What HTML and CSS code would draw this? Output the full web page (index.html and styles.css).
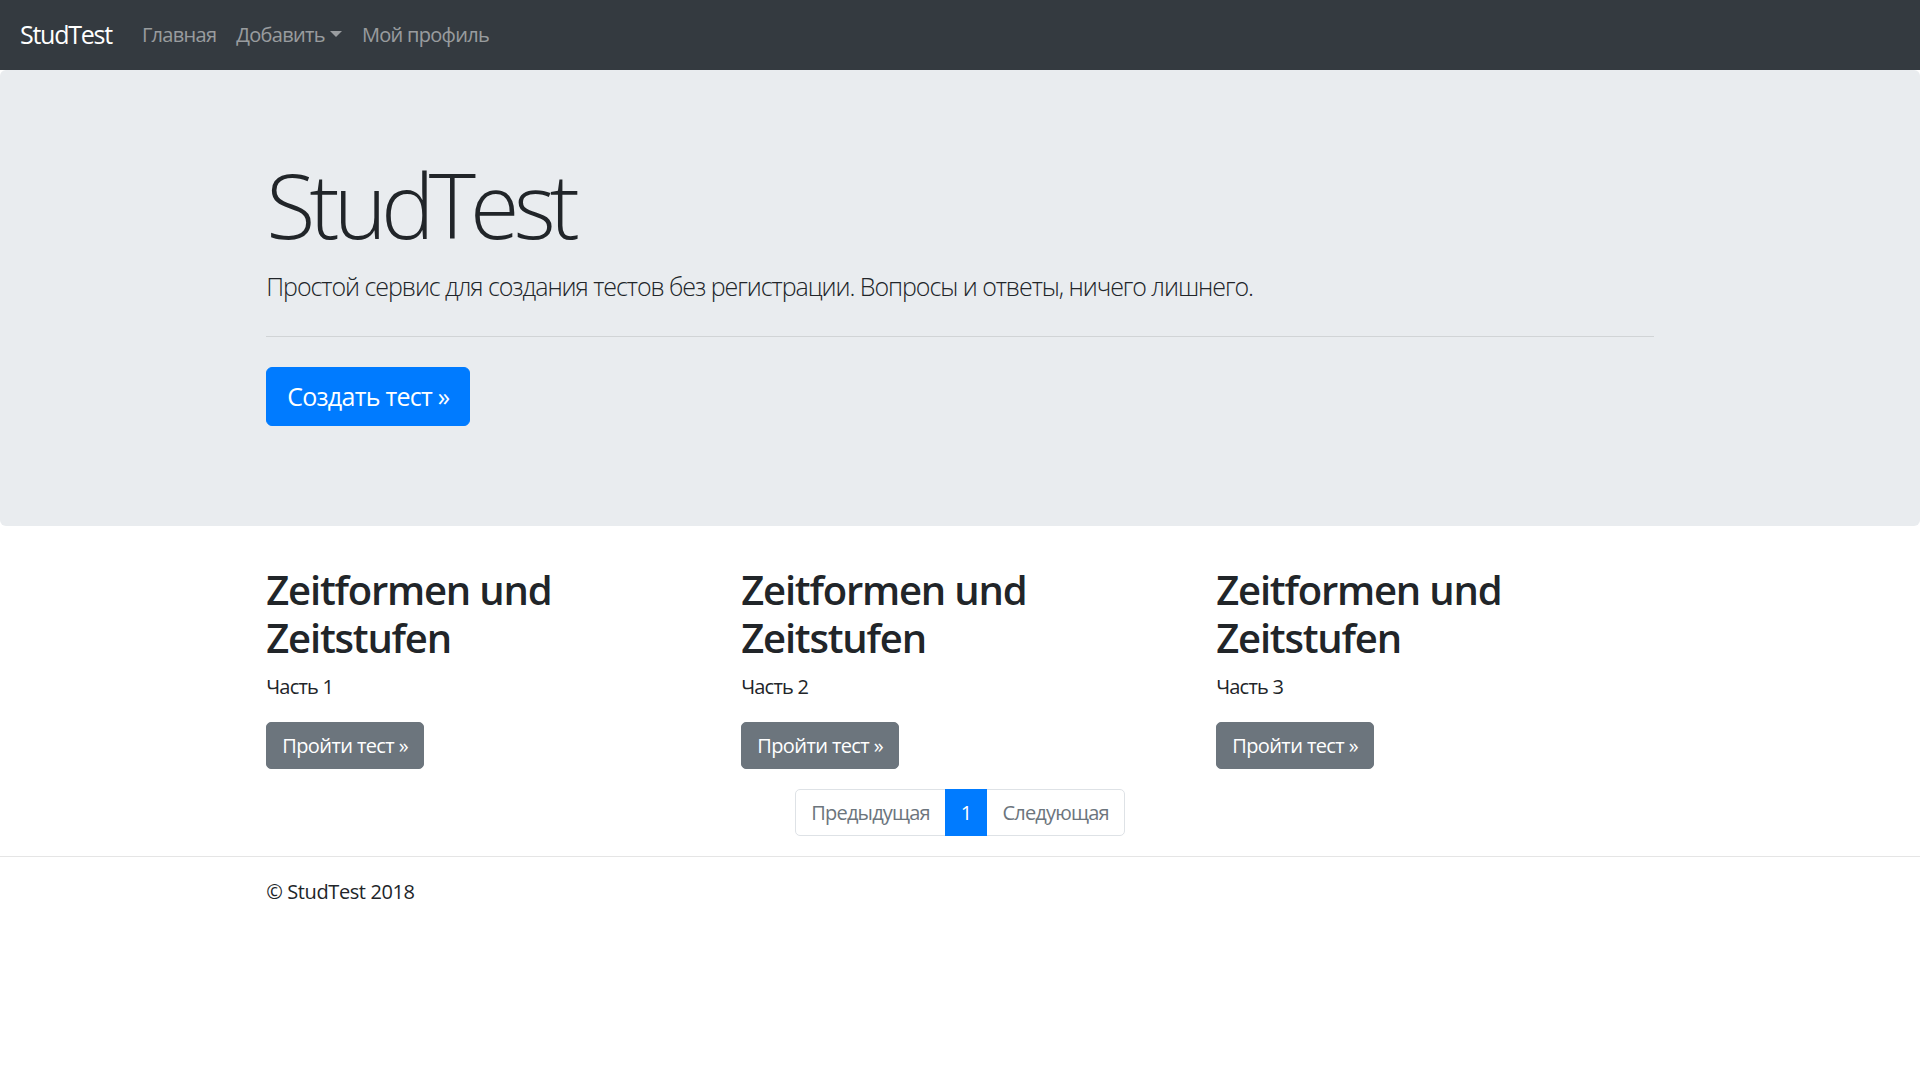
FILE: index.html
```html
<!DOCTYPE html>
<html lang="ru">
<head>
<meta charset="utf-8">
<title>StudTest</title>
<link rel="stylesheet" href="styles.css">
</head>
<body>
<nav class="navbar">
  <a class="brand" href="#">StudTest</a>
  <ul class="nav">
    <li><a class="nav-link" href="#">Главная</a></li>
    <li><a class="nav-link dropdown-toggle" href="#">Добавить</a></li>
    <li><a class="nav-link" href="#">Мой профиль</a></li>
  </ul>
</nav>
<main>
  <section class="jumbotron">
    <div class="container">
      <h1 class="display">StudTest</h1>
      <p class="lead">Простой сервис для создания тестов без регистрации. Вопросы и ответы, ничего лишнего.</p>
      <hr class="divider">
      <p class="cta"><a class="btn btn-primary btn-lg" href="#">Создать тест »</a></p>
    </div>
  </section>
  <div class="container">
    <div class="row">
      <div class="col">
        <h2>Zeitformen und Zeitstufen</h2>
        <p>Часть 1</p>
        <p class="cta"><a class="btn btn-secondary" href="#">Пройти тест »</a></p>
      </div>
      <div class="col">
        <h2>Zeitformen und Zeitstufen</h2>
        <p>Часть 2</p>
        <p class="cta"><a class="btn btn-secondary" href="#">Пройти тест »</a></p>
      </div>
      <div class="col">
        <h2>Zeitformen und Zeitstufen</h2>
        <p>Часть 3</p>
        <p class="cta"><a class="btn btn-secondary" href="#">Пройти тест »</a></p>
      </div>
    </div>
    <ul class="pagination">
      <li class="page-item"><a class="page-link" href="#">Предыдущая</a></li>
      <li class="page-item active"><a class="page-link" href="#">1</a></li>
      <li class="page-item"><a class="page-link" href="#">Следующая</a></li>
    </ul>
  </div>
</main>
<hr class="page-rule">
<footer class="container footer">
  <p>© StudTest 2018</p>
</footer>
</body>
</html>
```

FILE: styles.css
```css
*, *::before, *::after { box-sizing: border-box; }

html { font-size: 20px; }

body {
  margin: 0;
  font-family: "Open Sans", "Noto Sans", sans-serif;
  font-size: 1rem;
  line-height: 1.5;
  letter-spacing: -0.04em;
  color: #212529;
  background: #fff;
}

p { margin: 0 0 1rem; }

.navbar {
  display: flex;
  align-items: center;
  height: 70px;
  padding: .5rem 1rem;
  background: #343a40;
}

.brand {
  font-size: 1.25rem;
  line-height: 1.5;
  padding: .3125rem 0;
  margin-right: 1rem;
  color: #fff;
  letter-spacing: -0.05em;
  text-decoration: none;
}

.nav {
  display: flex;
  list-style: none;
  margin: 0;
  padding: 0;
}

.nav-link {
  display: block;
  padding: .5rem;
  color: rgba(255, 255, 255, .5);
  letter-spacing: -0.035em;
  text-decoration: none;
}

.dropdown-toggle::after {
  content: "";
  display: inline-block;
  margin-left: .255em;
  vertical-align: .255em;
  border-top: .3em solid;
  border-right: .3em solid transparent;
  border-left: .3em solid transparent;
  border-bottom: 0;
}

.jumbotron {
  background: #e9ecef;
  padding: 4rem 2rem;
  margin-bottom: 2rem;
  border-radius: .3rem;
}

.container {
  max-width: 1425px;
  margin: 0 auto;
  padding: 0 18.75px;
}

.display {
  font-size: 4.5rem;
  font-weight: 300;
  line-height: 1.2;
  letter-spacing: -0.065em;
  margin: -3px 0 .5rem;
  padding-top: 3px;
}

.lead {
  font-size: 1.25rem;
  font-weight: 300;
  letter-spacing: -0.042em;
  margin: 0 0 1rem;
}

.divider {
  margin: 1.5rem 0;
  border: 0;
  border-top: 1px solid rgba(0, 0, 0, .1);
}

.cta { display: flex; }

.btn {
  display: inline-block;
  font-weight: 400;
  text-align: center;
  border: 1px solid transparent;
  padding: .375rem .75rem;
  font-size: 1rem;
  line-height: 1.5;
  letter-spacing: -0.03em;
  border-radius: .25rem;
  text-decoration: none;
}

.btn-lg {
  padding: .5rem 1rem;
  font-size: 1.25rem;
  border-radius: .3rem;
}

.btn-primary { color: #fff; background: #007bff; border-color: #007bff; }
.btn-secondary { color: #fff; background: #6c757d; border-color: #6c757d; }

.row {
  display: flex;
  margin: 0 -18.75px;
}

.col {
  flex: 0 0 33.3333%;
  max-width: 33.3333%;
  padding: 0 18.75px;
}

h2 {
  font-size: 2rem;
  font-weight: 600;
  line-height: 1.2;
  letter-spacing: -0.03em;
  margin: 0 0 .5rem;
}

.pagination {
  display: flex;
  justify-content: center;
  list-style: none;
  padding: 0;
  margin: 0 0 1rem;
}

.page-link {
  display: block;
  padding: .5rem .75rem;
  margin-left: -1px;
  line-height: 1.25;
  color: #6c757d;
  background: #fff;
  border: 1px solid #dee2e6;
  text-decoration: none;
}

.page-item:first-child .page-link {
  margin-left: 0;
  border-radius: .25rem 0 0 .25rem;
}

.page-item:last-child .page-link {
  border-radius: 0 .25rem .25rem 0;
}

.page-item.active .page-link {
  position: relative;
  color: #fff;
  background: #007bff;
  border-color: #007bff;
}

.page-rule {
  margin: 1rem 0;
  border: 0;
  border-top: 1px solid rgba(0, 0, 0, .1);
}

.footer { letter-spacing: -0.02em; }
```
